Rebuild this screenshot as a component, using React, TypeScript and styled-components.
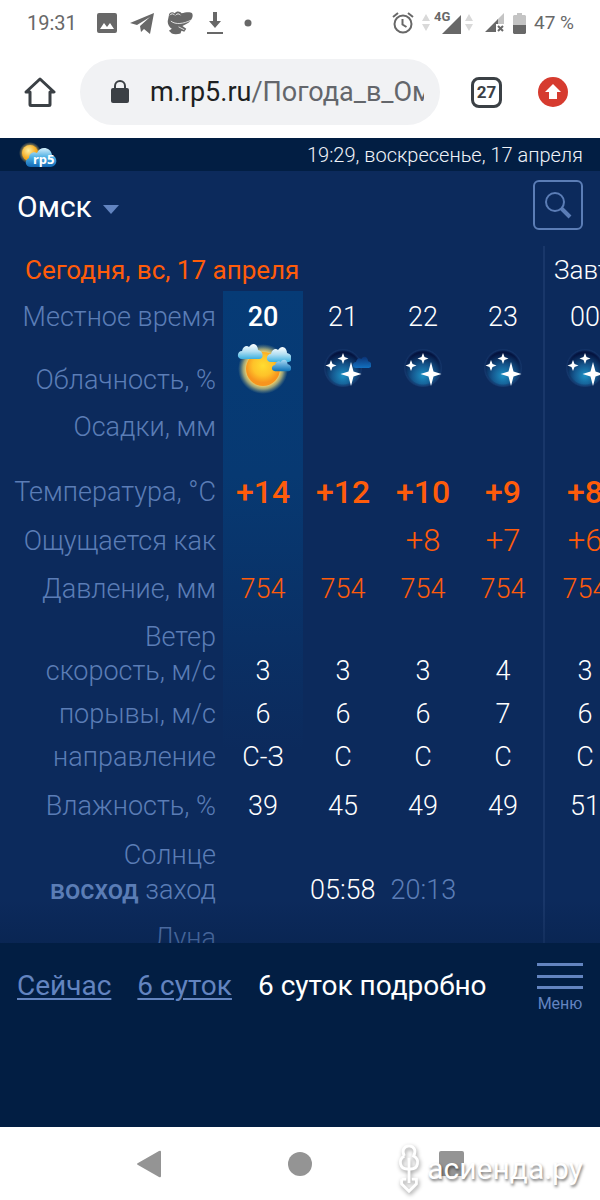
import React from 'react';
import styled, { createGlobalStyle, css } from 'styled-components';

const color = {
  page: '#0c2a5c',
  deep: '#021e43',
  muted: '#5b7db6',
  link: '#6384c0',
  accent: '#ff5c0a',
  chrome: '#3b4045',
  status: '#686868',
};

const GlobalStyle = createGlobalStyle`
  *, *::before, *::after { box-sizing: border-box; }
  body {
    margin: 0;
    background: #fff;
    font-family: Roboto, "Liberation Sans", sans-serif;
  }
  button { font: inherit; border: 0; padding: 0; background: none; cursor: pointer; }
  svg { display: block; flex: none; }
`;

const Screen = styled.div`
  display: flex;
  flex-direction: column;
  height: 100vh;
  overflow: hidden;
`;

/* Phone status bar */

const StatusBar = styled.header`
  display: flex;
  flex: none;
  align-items: center;
  justify-content: space-between;
  height: 46px;
  padding: 0 26px 0 27px;
  color: ${color.status};
  font-size: 20px;
  line-height: 24px;
`;

const StatusGroup = styled.div<{ $gap: number }>`
  display: flex;
  align-items: center;
  gap: ${(p) => p.$gap}px;
`;

const Signals = styled.div`
  display: flex;
  align-items: center;
  gap: 4px;
  margin-right: 4px;
`;

const Charge = styled.span`
  font-size: 19px;
`;

/* Browser toolbar */

const Toolbar = styled.div`
  display: flex;
  flex: none;
  align-items: center;
  height: 92px;
  padding: 0 31px 0 24px;
`;

const ToolButton = styled.button`
  display: flex;
  flex: none;
  align-items: center;
  justify-content: center;
  width: 32px;
  height: 32px;
`;

const AddressBar = styled.button`
  display: flex;
  flex: 1;
  align-items: center;
  gap: 20px;
  min-width: 0;
  height: 66px;
  margin: 0 31px 0 24px;
  padding: 0 16px 0 30px;
  border-radius: 33px;
  background: #f1f2f4;
  text-align: left;
`;

const Url = styled.span`
  flex: 1;
  min-width: 0;
  overflow: hidden;
  color: #63666b;
  font-size: 27px;
  line-height: 32px;
  white-space: nowrap;
`;

const Host = styled.span`
  color: #1d1f22;
`;

const TabCount = styled(ToolButton)`
  width: 31px;
  height: 31px;
  margin-right: 35px;
  border: 3px solid ${color.chrome};
  border-radius: 8px;
  color: ${color.chrome};
  font-size: 17px;
  font-weight: 700;
`;

/* Weather site */

const SiteBar = styled.div`
  display: flex;
  flex: none;
  align-items: center;
  justify-content: space-between;
  height: 33px;
  padding: 0 17px 0 18px;
  background: ${color.deep};
  color: #f0f3f8;
  font-size: 20px;
  font-weight: 300;
`;

const CityBar = styled.div`
  display: flex;
  flex: none;
  align-items: center;
  justify-content: space-between;
  height: 75px;
  padding: 0 17px 8px;
  background: ${color.page};
`;

const CityButton = styled.button`
  display: flex;
  align-items: center;
  gap: 11px;
  padding-top: 5px;
  color: #fff;
  font-size: 30px;
  line-height: 36px;

  svg { margin-top: 4px; }
`;

const SearchButton = styled.button`
  display: flex;
  align-items: center;
  justify-content: center;
  width: 50px;
  height: 50px;
  border: 2px solid ${color.muted};
  border-radius: 6px;
`;

const Forecast = styled.main`
  position: relative;
  flex: 1;
  min-height: 0;
  overflow: hidden;
  background: ${color.page};

  &::after {
    content: '';
    position: absolute;
    right: 0;
    bottom: 0;
    left: 0;
    height: 44px;
    background: linear-gradient(rgba(4, 28, 64, 0), rgba(4, 28, 64, 0.3));
  }
`;

const ForecastTable = styled.table`
  width: 625px;
  table-layout: fixed;
  border-collapse: separate;
  border-spacing: 0;
  background: linear-gradient(#063b76, #073972 40%, rgba(12, 42, 92, 0)) 223px 45px / 80px 460px no-repeat;
  color: #fff;
  font-size: 27px;
  font-weight: 300;
  line-height: 32px;
  white-space: nowrap;
`;

const Col = styled.col<{ $width: number }>`
  width: ${(p) => p.$width}px;
`;

const Row = styled.tr<{ $height: number }>`
  height: ${(p) => p.$height}px;
`;

const nextDayEdge = css`
  border-left: 2px solid #19376a;
`;

const DayCell = styled.th<{ $next?: boolean }>`
  padding: 0 0 5px ${(p) => (p.$next ? 9 : 25)}px;
  ${(p) => p.$next && nextDayEdge}
  color: ${(p) => (p.$next ? '#fff' : color.accent)};
  font-size: 26px;
  font-weight: ${(p) => (p.$next ? 300 : 400)};
  text-align: left;
  vertical-align: bottom;
`;

const LabelCell = styled.th`
  padding: 0 7px 0 0;
  color: ${color.muted};
  font-weight: 300;
  text-align: right;
  vertical-align: bottom;
`;

const Strong = styled.b`
  font-weight: 500;
`;

type Tone = 'plain' | 'now' | 'warm' | 'feels' | 'temp';

const toneStyle = {
  plain: css``,
  now: css`font-weight: 500;`,
  warm: css`color: ${color.accent};`,
  feels: css`color: ${color.accent}; font-size: 31px;`,
  temp: css`color: ${color.accent}; font-size: 32px; font-weight: 500;`,
};

const ValueCell = styled.td<{ $tone?: Tone; $next?: boolean }>`
  padding: 0;
  ${(p) => p.$next && nextDayEdge}
  text-align: center;
  vertical-align: bottom;
  ${(p) => toneStyle[p.$tone ?? 'plain']}

  svg { margin: 0 auto; }
`;

const Sunset = styled.span`
  margin-left: 15px;
  color: ${color.muted};
`;

const Footer = styled.footer`
  display: flex;
  flex: none;
  align-items: flex-start;
  justify-content: space-between;
  height: 184px;
  padding: 19px 17px 0;
  background: ${color.deep};
`;

const Views = styled.nav`
  display: flex;
  gap: 26px;
  padding-top: 6px;
  color: #fff;
  font-size: 28px;
  line-height: 36px;
  white-space: nowrap;
`;

const ViewLink = styled.a`
  color: ${color.link};
  text-decoration: underline;
  text-decoration-thickness: 2px;
  text-underline-offset: 3px;
`;

const MenuButton = styled.button`
  display: flex;
  flex-direction: column;
  align-items: center;
  gap: 4px;
  color: ${color.link};
  font-size: 16px;
  line-height: 20px;
`;

/* Phone navigation */

const PhoneNav = styled.nav`
  position: relative;
  display: flex;
  flex: none;
  align-items: center;
  justify-content: center;
  height: 73px;
  background: #fff;
`;

const KeyRow = styled.div`
  display: flex;
  gap: 119px;
`;

const Watermark = styled.div`
  position: absolute;
  right: 17px;
  bottom: 4px;
  display: flex;
  align-items: center;
  gap: 5px;
  color: #fff;
  font-size: 30px;
  line-height: 40px;
  text-shadow: 1px 2px 3px rgba(0, 0, 0, 0.55);

  svg { filter: drop-shadow(1px 2px 2px rgba(0, 0, 0, 0.4)); }
`;

/* Drawings */

const ImageIcon = () => (
  <svg width="20" height="20" viewBox="0 0 20 20">
    <path fill={color.status} fillRule="evenodd" d="M2 0h16a2 2 0 0 1 2 2v16a2 2 0 0 1-2 2H2a2 2 0 0 1-2-2V2a2 2 0 0 1 2-2zm1 16h14l-4-6-3 4-3-4z" />
  </svg>
);

const TelegramIcon = () => (
  <svg width="24" height="21" viewBox="0 0 24 21">
    <path fill={color.status} d="M24 0 20 21l-6-5-3 3-1-6L20 4 7 12l-7-2z" />
  </svg>
);

const FrogIcon = () => (
  <svg width="26" height="24" viewBox="0 0 27 24">
    <path fill={color.status} d="M2 4C2 1 6 0 8 2c2-3 6-2 7 0 4-1 9-2 11 0 2 3-1 9-6 11l-4 2 4 3-2 3-3-1-1 3c-3 1-7 1-9 0l-3-3 3-2c-3-2-5-6-4-9z" />
    <path fill="none" stroke="#fff" strokeWidth=".8" d="M4 10c5 4 13 3 21-1M12 16l6 3" />
    <path fill="none" stroke="#fff" strokeWidth=".9" d="M3 4c1-2 4-2 5 0M9 4c1-2 4-2 5 0" />
  </svg>
);

const DownloadIcon = () => (
  <svg width="18" height="23" viewBox="0 0 18 23">
    <path fill={color.status} d="M7 0h4v9h4l-6 7-6-7h4zM1 20h16v2H1z" />
  </svg>
);

const DotIcon = () => (
  <svg width="8" height="8" viewBox="0 0 8 8"><circle cx="4" cy="4" r="3.500" fill={color.status} /></svg>
);

const AlarmIcon = () => (
  <svg width="22" height="22" viewBox="0 0 22 22" fill="none" stroke={color.status} strokeWidth="2">
    <circle cx="11" cy="12" r="8.500" />
    <path d="M10.500 7v5.500l4 2.500M1 5l5-4M21 5l-5-4" />
  </svg>
);

const DataArrows = () => (
  <svg width="8" height="18" viewBox="0 0 8 18">
    <path fill="#d9d9d9" d="M4 0l4 7H0zM4 17l4-7H0z" />
  </svg>
);

const NetworkIcon = () => (
  <svg width="27" height="26" viewBox="0 0 27 26">
    <path fill={color.status} d="M27 5v19H8z" />
    <text x="0" y="11" fill={color.status} stroke="#fff" strokeWidth="2" paintOrder="stroke" fontSize="13" fontWeight="700" fontFamily="Roboto, sans-serif">4G</text>
  </svg>
);

const NoSimIcon = () => (
  <svg width="20" height="20" viewBox="0 0 20 20">
    <path fill="#c4c4c4" d="M19 0v11h-7V7z" />
    <path fill={color.status} d="M13 6v5h-2v8H0z" />
    <path stroke={color.status} strokeWidth="2" d="m13 13 5 5m0-5-5 5" />
  </svg>
);

const BatteryIcon = () => (
  <svg width="13" height="21" viewBox="0 0 13 21">
    <path fill="#c4c4c4" d="M4 0h5v2h3l1 1v9H0V3l1-1h3z" />
    <path fill={color.status} d="M0 12h13v8l-1 1H1l-1-1z" />
  </svg>
);

const HomeIcon = () => (
  <svg width="32" height="32" viewBox="0 0 32 32" fill="none" stroke={color.chrome} strokeWidth="3" strokeLinejoin="round">
    <path d="M2 16 16 3l14 13h-4v12.500a1 1 0 0 1-1 1H7a1 1 0 0 1-1-1V16z" />
  </svg>
);

const LockIcon = () => (
  <svg width="20" height="24" viewBox="0 0 20 24">
    <path fill="none" stroke={color.chrome} strokeWidth="2" d="M5 10V6a5 5 0 0 1 10 0v4" />
    <rect x="1" y="8" width="18" height="15" rx="2" fill={color.chrome} />
  </svg>
);

const UpdateIcon = () => (
  <svg width="30" height="30" viewBox="0 0 30 30">
    <circle cx="15" cy="15" r="15" fill="#d63b2f" />
    <path fill="#fff" d="m15 7 8 8h-4v7h-8v-7H7z" />
  </svg>
);

const Logo = () => (
  <svg width="40" height="28" viewBox="0 0 40 28" role="img" aria-label="rp5">
    <defs>
      <radialGradient id="logoGlow"><stop offset=".5" stopColor="#f5b530" /><stop offset="1" stopColor="#f5d070" stopOpacity="0" /></radialGradient>
      <radialGradient id="logoSun" cx=".4" cy=".35"><stop stopColor="#fff0a0" /><stop offset="1" stopColor="#f5a81c" /></radialGradient>
      <linearGradient id="logoCloud" x2="0" y2="1"><stop stopColor="#d5effb" /><stop offset=".5" stopColor="#4aaee3" /><stop offset="1" stopColor="#1268b5" /></linearGradient>
    </defs>
    <circle cx="12" cy="12" r="11" fill="url(#logoGlow)" />
    <circle cx="12" cy="12" r="8" fill="url(#logoSun)" />
    <path fill="url(#logoCloud)" d="M13 26c-6 0-7-7-2-9 0-5 5-7 8-5 3-8 14-6 15 2 6 2 6 11-1 12z" />
    <text x="15" y="23" fill="#fff" fontSize="13" fontWeight="700" fontFamily="Noto Sans, sans-serif">rp5</text>
  </svg>
);

const Caret = () => (
  <svg width="16" height="9" viewBox="0 0 16 9"><path fill="#6284c0" d="M0 0h16L8 9z" /></svg>
);

const SearchIcon = () => (
  <svg width="28" height="28" viewBox="0 0 28 28" fill="none" stroke={color.muted}>
    <circle cx="11" cy="11" r="9" strokeWidth="2" />
    <path d="m17 17 9 9" strokeWidth="4" />
  </svg>
);

const cloudPath = 'M4 16c-6 0-5-8 0-8 1-5 5-6 7-4 4-6 9-2 9 3 6 1 6 9 1 9z';

const WeatherDefs = () => (
  <defs>
    <radialGradient id="glow"><stop offset=".65" stopColor="#ffd968" /><stop offset=".8" stopColor="#d6cb7a" stopOpacity=".7" /><stop offset="1" stopColor="#8fa98a" stopOpacity="0" /></radialGradient>
    <radialGradient id="sun" cy=".4"><stop stopColor="#ffdd31" /><stop offset=".6" stopColor="#fec229" /><stop offset="1" stopColor="#f7941e" /></radialGradient>
    <linearGradient id="cloudLight" x2="0" y2="1"><stop stopColor="#fff" /><stop offset=".5" stopColor="#b0def2" /><stop offset="1" stopColor="#3bb0e0" /></linearGradient>
    <linearGradient id="cloudMid" x2="0" y2="1"><stop stopColor="#a8d8f2" /><stop offset="1" stopColor="#0b72b8" /></linearGradient>
  </defs>
);

const SunCloudsIcon = () => (
  <svg width="56" height="54" viewBox="0 0 56 54" role="img" aria-label="Переменная облачность">
    <WeatherDefs />
    <circle cx="28" cy="27" r="25" fill="url(#glow)" />
    <circle cx="28" cy="27" r="17" fill="url(#sun)" />
    <path fill="url(#cloudLight)" d={cloudPath} transform="translate(3 1)" />
    <path fill="url(#cloudLight)" d={cloudPath} transform="translate(32 4)" />
    <path fill="url(#cloudMid)" d={cloudPath} transform="translate(37 17) scale(.78 .76)" />
  </svg>
);

const NightIcon = ({ id, cloud }: { id: string; cloud?: boolean }) => (
  <svg width="56" height="54" viewBox="0 0 56 54" role="img" aria-label={cloud ? 'Малооблачно' : 'Ясно'}>
    <defs>
      <radialGradient id={`night-${id}`} cx=".5" cy=".7" r=".7">
        <stop stopColor="#1d91c4" /><stop offset=".4" stopColor="#15588f" /><stop offset=".85" stopColor="#04133f" />
      </radialGradient>
      <radialGradient id={`rim-${id}`}><stop offset=".82" stopColor="#0c2a5c" stopOpacity="0" /><stop offset=".93" stopColor="#173a70" stopOpacity=".8" /><stop offset="1" stopColor="#0c2a5c" /></radialGradient>
      <linearGradient id={`dusk-${id}`} x2="0" y2="1"><stop stopColor="#0c3376" /><stop offset="1" stopColor="#1270bf" /></linearGradient>
    </defs>
    <circle cx="28" cy="26" r="19" fill={`url(#night-${id})`} />
    <circle cx="28" cy="26" r="19.500" fill={`url(#rim-${id})`} />
    <g fill="#fff">
      <path d="M28 11l1.500 4 4 1.500-4 1.500-1.500 4-1.500-4-4-1.500 4-1.500zM16 18l1.500 4 4 1.500-4 1.500-1.500 4-1.500-4-4-1.500 4-1.500z" />
      <path d="M36 20l2.500 9.500 8 2.500-8 2.500L36 44l-2.500-9.500-8-2.500 8-2.500z" />
    </g>
    {cloud && <path fill={`url(#dusk-${id})`} d={cloudPath} transform="translate(38 14) scale(.75)" />}
  </svg>
);

const MenuIcon = () => (
  <svg width="46" height="28" viewBox="0 0 46 28"><path fill={color.link} d="M0 1h46v3H0zM0 13h46v3H0zM0 24h46v3H0z" /></svg>
);

const WatermarkIcon = () => (
  <svg width="26" height="54" viewBox="0 0 28 54" fill="none" stroke="#fff" strokeWidth="3">
    <path d="M9 13C6 8 8 2 14 2s8 6 5 11c7 4 5 14-3 14h-2M9 13c-7 4-5 14 3 14h2M14 15v27M6 38v5l8 8 8-8v-5h-5M6 38h5" />
  </svg>
);

/* Data */

type RowSpec = { label: React.ReactNode; height: number; tones?: Tone; values: React.ReactNode[] };

const empty = ['', '', '', '', ''];

const rows: RowSpec[] = [
  { label: 'Местное время', height: 42, values: ['20', '21', '22', '23', '00'] },
  {
    label: 'Облачность, %',
    height: 63,
    values: [
      <SunCloudsIcon />,
      <NightIcon id="21" cloud />,
      <NightIcon id="22" />,
      <NightIcon id="23" />,
      <NightIcon id="00" />,
    ],
  },
  { label: 'Осадки, мм', height: 47, values: empty },
  { label: 'Температура, °C', height: 65, tones: 'temp', values: ['+14', '+12', '+10', '+9', '+8'] },
  { label: 'Ощущается как', height: 49, tones: 'feels', values: ['', '', '+8', '+7', '+6'] },
  { label: 'Давление, мм', height: 48, tones: 'warm', values: ['754', '754', '754', '754', '754'] },
  { label: 'Ветер', height: 48, values: empty },
  { label: 'скорость, м/с', height: 34, values: ['3', '3', '3', '4', '3'] },
  { label: 'порывы, м/с', height: 43, values: ['6', '6', '6', '7', '6'] },
  { label: 'направление', height: 43, values: ['С-З', 'С', 'С', 'С', 'С'] },
  { label: 'Влажность, %', height: 49, values: ['39', '45', '49', '49', '51'] },
  { label: 'Солнце', height: 49, values: empty },
];

export default function App() {
  return (
    <Screen>
      <GlobalStyle />
      <StatusBar>
        <StatusGroup $gap={20}>
          <span>19:31</span>
          <StatusGroup $gap={13}>
            <ImageIcon />
            <TelegramIcon />
            <FrogIcon />
            <DownloadIcon />
          </StatusGroup>
          <DotIcon />
        </StatusGroup>
        <StatusGroup $gap={8}>
          <AlarmIcon />
          <Signals>
            <DataArrows />
            <NetworkIcon />
            <DataArrows />
          </Signals>
          <NoSimIcon />
          <BatteryIcon />
          <Charge>47 %</Charge>
        </StatusGroup>
      </StatusBar>

      <Toolbar>
        <ToolButton aria-label="Домой"><HomeIcon /></ToolButton>
        <AddressBar>
          <LockIcon />
          <Url><Host>m.rp5.ru</Host>/Погода_в_Омске</Url>
        </AddressBar>
        <TabCount>27</TabCount>
        <ToolButton aria-label="Обновить"><UpdateIcon /></ToolButton>
      </Toolbar>

      <SiteBar>
        <Logo />
        <span>19:29, воскресенье, 17 апреля</span>
      </SiteBar>
      <CityBar>
        <CityButton>Омск <Caret /></CityButton>
        <SearchButton aria-label="Поиск"><SearchIcon /></SearchButton>
      </CityBar>

      <Forecast>
        <ForecastTable>
          <colgroup>
            <Col $width={223} />
            <Col span={4} $width={80} />
            <Col $width={82} />
          </colgroup>
          <tbody>
            <Row $height={45}>
              <DayCell colSpan={5}>Сегодня, вс, 17 апреля</DayCell>
              <DayCell $next>Завтра</DayCell>
            </Row>
            {rows.map((row, r) => (
              <Row key={r} $height={row.height}>
                <LabelCell scope="row">{row.label}</LabelCell>
                {row.values.map((value, i) => (
                  <ValueCell key={i} $next={i === 4} $tone={r === 0 && i === 0 ? 'now' : row.tones}>
                    {value}
                  </ValueCell>
                ))}
              </Row>
            ))}
            <Row $height={35}>
              <LabelCell scope="row"><Strong>восход</Strong> заход</LabelCell>
              <ValueCell colSpan={4}>05:58<Sunset>20:13</Sunset></ValueCell>
              <ValueCell $next />
            </Row>
            <Row $height={48}>
              <LabelCell scope="row">Луна</LabelCell>
              <ValueCell colSpan={4} />
              <ValueCell $next />
            </Row>
          </tbody>
        </ForecastTable>
      </Forecast>

      <Footer>
        <Views>
          <ViewLink href="#now">Сейчас</ViewLink>
          <ViewLink href="#six-days">6 суток</ViewLink>
          <span>6 суток подробно</span>
        </Views>
        <MenuButton><MenuIcon />Меню</MenuButton>
      </Footer>

      <PhoneNav>
        <KeyRow>
          <ToolButton aria-label="Назад">
            <svg width="24" height="28" viewBox="0 0 24 28"><path fill="#949494" d="M22 1q2-1 2 1v24q0 2-2 1L1 15q-2-1 0-2z" /></svg>
          </ToolButton>
          <ToolButton aria-label="Главный экран">
            <svg width="24" height="24" viewBox="0 0 24 24"><circle cx="12" cy="12" r="12" fill="#949494" /></svg>
          </ToolButton>
          <ToolButton aria-label="Недавние">
            <svg width="25" height="25" viewBox="0 0 25 25"><rect width="25" height="25" rx="2" fill="#949494" /></svg>
          </ToolButton>
        </KeyRow>
        <Watermark><WatermarkIcon />асиенда.ру</Watermark>
      </PhoneNav>
    </Screen>
  );
}
